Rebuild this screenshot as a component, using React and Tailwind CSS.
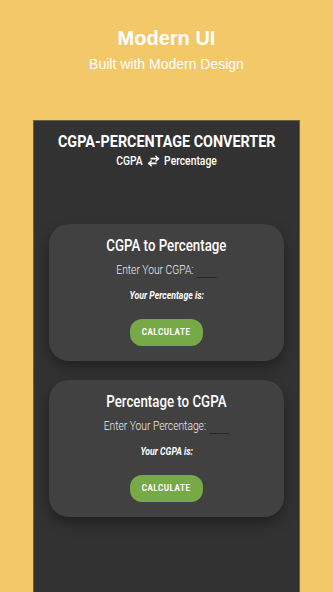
import React from "react";

const SwapIcon = () => (
  <svg width="15" height="12" viewBox="0 0 16 12" fill="none" className="mx-[5px]">
    <path d="M5 3.5h9M11 1l3 2.5L11 6" stroke="white" strokeWidth="1.7" strokeLinecap="square" strokeLinejoin="miter" />
    <path d="M11 8.5H2M5 6l-3 2.5L5 11" stroke="white" strokeWidth="1.7" strokeLinecap="square" strokeLinejoin="miter" />
  </svg>
);

const ConvertCard = ({ title, label, result }) => (
  <div className="mx-[15px] rounded-[20px] bg-[#414141] shadow-[0_6px_14px_rgba(0,0,0,0.35)] pt-[12px] pb-[15px] flex flex-col items-center">
    <h2 className="text-white font-medium text-[16px] leading-5 scale-x-[0.83] whitespace-nowrap">{title}</h2>
    <div className="mt-[6px] flex items-end text-[13px] leading-4 text-[#efefef] font-light scale-x-[0.79] whitespace-nowrap">
      <span>{label}</span>
      <span className="ml-[4px] w-[25px] border-b border-[#262626]" />
    </div>
    <p className="mt-[12px] text-[10.5px] leading-3 text-white font-bold italic scale-x-[0.83] whitespace-nowrap">{result}</p>
    <button className="mt-[17px] h-[27px] w-[73px] rounded-[12px] bg-[#78a947] text-white text-[9.5px] font-bold tracking-[0.07em]">
      <span className="inline-block scale-x-[0.84]">CALCULATE</span>
    </button>
  </div>
);

export default function App() {
  return (
    <div className="h-[592px] w-[333px] bg-[#f2c868] flex flex-col items-center overflow-hidden">
      <h1 className="mt-[26px] text-white font-bold text-[20px] leading-6" style={{ fontFamily: "'Liberation Sans', Arial, sans-serif" }}>
        Modern UI
      </h1>
      <p className="mt-[4px] text-white text-[14px] leading-5" style={{ fontFamily: "'Liberation Sans', Arial, sans-serif" }}>
        Built with Modern Design
      </p>
      <div
        className="mt-[46px] w-[267px] flex-1 bg-[#323232] border border-b-0 border-[#6a6245]"
        style={{ fontFamily: "Roboto, 'Liberation Sans', sans-serif" }}
      >
        <div className="pt-[10px] flex flex-col items-center">
          <h3 className="text-white font-bold text-[17px] leading-5 scale-x-[0.845] whitespace-nowrap">CGPA-PERCENTAGE CONVERTER</h3>
          <div className="mt-[2px] flex items-center text-white font-medium text-[12px] leading-4 scale-x-[0.86] whitespace-nowrap">
            <span>CGPA</span>
            <SwapIcon />
            <span>Percentage</span>
          </div>
        </div>
        <div className="mt-[55px] flex flex-col gap-[19px]">
          <ConvertCard title="CGPA to Percentage" label="Enter Your CGPA:" result="Your Percentage is:" />
          <ConvertCard title="Percentage to CGPA" label="Enter Your Percentage:" result="Your CGPA is:" />
        </div>
      </div>
    </div>
  );
}
